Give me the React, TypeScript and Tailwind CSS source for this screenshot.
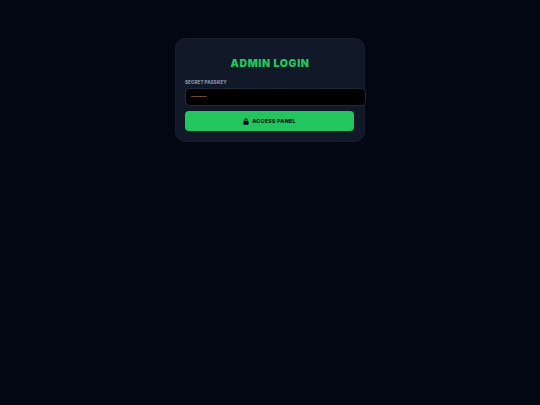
export default function App() {
  return (
    <div className="min-h-[405px] bg-[#020713] flex justify-center pt-[38px] font-['Inter',sans-serif]">
      <div className="w-[190px] h-[104px] rounded-[10px] bg-[#111827] border border-[#161e2c] px-[9px] pt-[18px]">
        <h1 className="text-center text-[#22c55e] text-[10.5px] leading-[14px] font-black tracking-[0.65px]">ADMIN LOGIN</h1>
        <label className="block mt-[9px] text-[#7d8aa0] text-[4.5px] leading-[6px] font-black tracking-[0.1px]">SECRET PASSKEY</label>
        <div className="mt-[2px] w-[180.5px] h-[18px] rounded-[5px] bg-black border border-[#1f2937] flex items-center pl-[5px] pt-[2px] text-[#9ca3af] text-[3.5px] leading-none">
          ••••••••
        </div>
        <button className="mt-[5px] w-[169px] h-[20px] rounded-[4px] bg-[#22c55e] flex items-center justify-center gap-[3px] pt-[1px] text-[#020617] text-[5.3px] font-extrabold tracking-[0.25px]">
          <svg width="6" height="7" viewBox="0 0 12 14" fill="none">
            <path d="M3.5 6V4a2.5 2.5 0 0 1 5 0v2" stroke="#020617" strokeWidth="1.8" />
            <rect x="1" y="6" width="10" height="7.5" rx="1" fill="#020617" />
          </svg>
          ACCESS PANEL
        </button>
      </div>
    </div>
  );
}
